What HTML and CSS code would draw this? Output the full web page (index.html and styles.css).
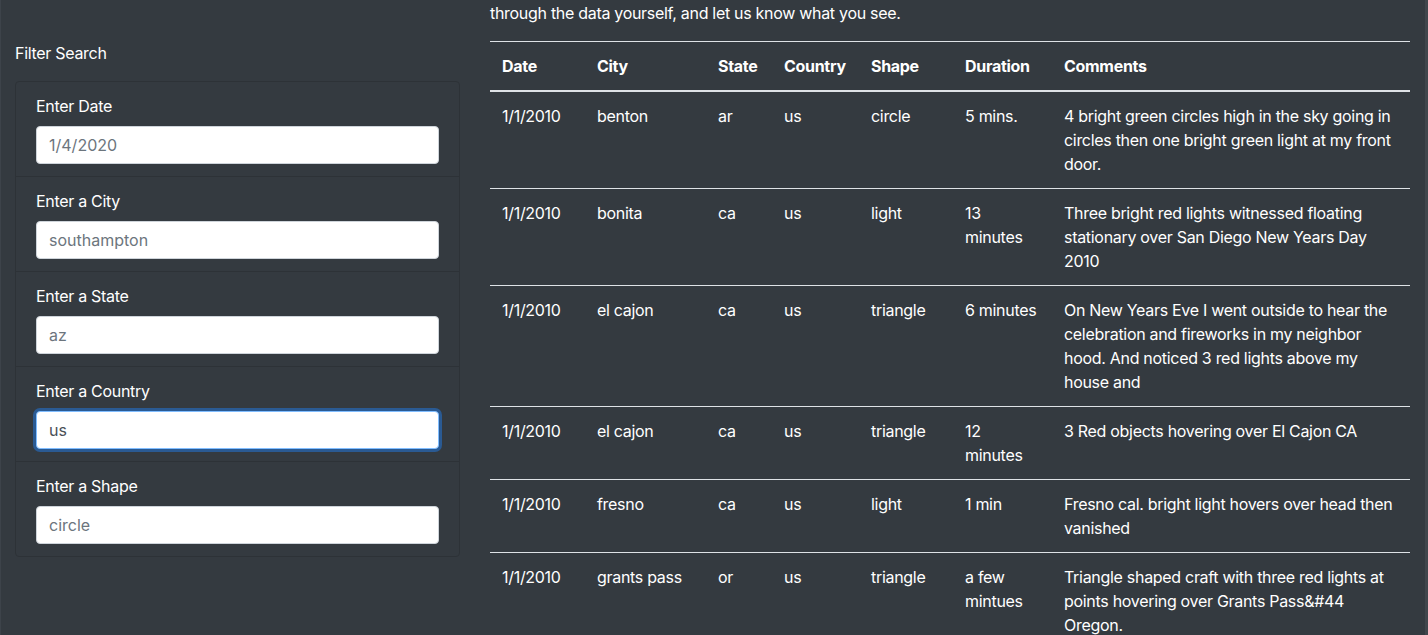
FILE: index.html
```html
<!DOCTYPE html>
<html lang="en">
<head>
<meta charset="utf-8">
<title>UFO Sightings</title>
<link rel="stylesheet" href="styles.css">
</head>
<body>
<div class="page">
  <aside class="sidebar">
    <p class="filter-title">Filter Search</p>
    <ul class="filters">
      <li class="filter-item">
        <label class="filter-label" for="date">Enter Date</label>
        <input class="filter-input" id="date" type="text" placeholder="1/4/2020">
      </li>
      <li class="filter-item">
        <label class="filter-label" for="city">Enter a City</label>
        <input class="filter-input" id="city" type="text" placeholder="southampton">
      </li>
      <li class="filter-item">
        <label class="filter-label" for="state">Enter a State</label>
        <input class="filter-input" id="state" type="text" placeholder="az">
      </li>
      <li class="filter-item">
        <label class="filter-label" for="country">Enter a Country</label>
        <input class="filter-input is-focused" id="country" type="text" value="us">
      </li>
      <li class="filter-item">
        <label class="filter-label" for="shape">Enter a Shape</label>
        <input class="filter-input" id="shape" type="text" placeholder="circle">
      </li>
    </ul>
  </aside>
  <main class="content">
    <p class="intro">through the data yourself, and let us know what you see.</p>
    <table class="ufo-table">
      <thead>
        <tr>
          <th class="c-date">Date</th>
          <th class="c-city">City</th>
          <th class="c-state">State</th>
          <th class="c-country">Country</th>
          <th class="c-shape">Shape</th>
          <th class="c-duration">Duration</th>
          <th class="c-comments">Comments</th>
        </tr>
      </thead>
      <tbody>
        <tr>
          <td>1/1/2010</td><td>benton</td><td>ar</td><td>us</td><td>circle</td><td>5 mins.</td>
          <td>4 bright green circles high in the sky going in circles then one bright green light at my front door.</td>
        </tr>
        <tr>
          <td>1/1/2010</td><td>bonita</td><td>ca</td><td>us</td><td>light</td><td>13 minutes</td>
          <td>Three bright red lights witnessed floating stationary over San Diego New Years Day 2010</td>
        </tr>
        <tr>
          <td>1/1/2010</td><td>el cajon</td><td>ca</td><td>us</td><td>triangle</td><td>6 minutes</td>
          <td>On New Years Eve I went outside to hear the celebration and fireworks in my neighbor hood. And noticed 3 red lights above my house and</td>
        </tr>
        <tr>
          <td>1/1/2010</td><td>el cajon</td><td>ca</td><td>us</td><td>triangle</td><td>12 minutes</td>
          <td>3 Red objects hovering over El Cajon CA</td>
        </tr>
        <tr>
          <td>1/1/2010</td><td>fresno</td><td>ca</td><td>us</td><td>light</td><td>1 min</td>
          <td>Fresno cal. bright light hovers over head then vanished</td>
        </tr>
        <tr>
          <td>1/1/2010</td><td>grants pass</td><td>or</td><td>us</td><td>triangle</td><td>a few mintues</td>
          <td>Triangle shaped craft with three red lights at points hovering over Grants Pass&amp;#44 Oregon.</td>
        </tr>
      </tbody>
    </table>
  </main>
</div>
</body>
</html>
```
FILE: styles.css
```css
* { box-sizing: border-box; }
html, body {
  margin: 0;
  height: 100%;
  overflow: hidden;
}
body {
  background: #343a40;
  color: #fff;
  font-family: Inter, "Noto Sans", "Liberation Sans", sans-serif;
  font-size: 16px;
  line-height: 24px;
  letter-spacing: -0.3px;
}
.page {
  width: 1428px;
  height: 635px;
  display: grid;
  grid-template-columns: 475px 950px 3px;
  box-shadow: inset 1px 0 0 #3d434a;
}
.page::after {
  content: "";
  background: #40464c;
}
.sidebar {
  padding: 41px 15px 0;
}
.filter-title {
  margin: 0 0 16px;
}
.filters {
  list-style: none;
  margin: 0;
  padding: 0;
  border: 1px solid #2d3237;
  border-radius: 4px;
}
.filter-item {
  padding: 12px 20px;
  border-top: 1px solid #2d3237;
  display: flex;
  flex-direction: column;
}
.filter-item:first-child { border-top: none; }
.filter-label {
  margin-bottom: 8px;
}
.filter-input {
  height: 38px;
  padding: 6px 12px;
  font: inherit;
  color: #495057;
  background: #fff;
  border: 1px solid #ced4da;
  border-radius: 4px;
  outline: none;
}
.filter-input::placeholder { color: #6c757d; opacity: 1; }
.filter-input.is-focused {
  border-color: #80bdff;
  box-shadow: 0 0 0 3px #2a5a93;
}
.content {
  padding: 1px 15px 0;
}
.intro {
  margin: 0 0 16px;
}
.ufo-table {
  width: 920px;
  border-collapse: collapse;
  table-layout: fixed;
}
.ufo-table th,
.ufo-table td {
  padding: 12px;
  text-align: left;
  vertical-align: top;
  border-top: 1px solid #dee2e6;
}
.ufo-table th {
  font-weight: 700;
  border-bottom: 2px solid #dee2e6;
}
.ufo-table tbody tr:first-child td { border-top: none; }
.c-date { width: 95px; }
.c-city { width: 121px; }
.c-state { width: 66px; }
.c-country { width: 87px; }
.c-shape { width: 94px; }
.c-duration { width: 99px; }
.c-comments { width: 358px; }
```
